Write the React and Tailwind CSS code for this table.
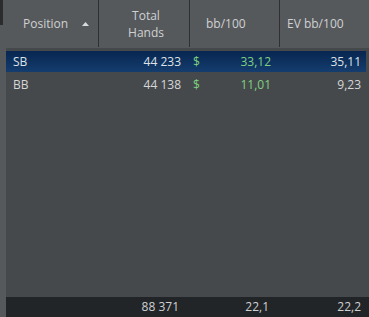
const rows = [
  { pos: 'SB', hands: '44 233', bb: '33,12', ev: '35,11', selected: true },
  { pos: 'BB', hands: '44 138', bb: '11,01', ev: '9,23', selected: false },
];

export default function App() {
  return (
    <div className="w-[369px] h-[317px] flex bg-[#46494c] text-[12px] text-[#d4d6d8] overflow-hidden" style={{ fontFamily: '"Open Sans", "Noto Sans", sans-serif' }}>
      <div className="w-[6px] shrink-0 bg-[#56595c] flex flex-col">
        <div className="w-[3px] h-[25px] bg-[#2a2c2e]"></div>
      </div>
      <div className="flex-1 flex flex-col">
        {/* header */}
        <div className="h-[48px] shrink-0 bg-[#56595c] grid grid-cols-[93px_91px_90px_1fr] text-[#cfd1d3]">
          <div className="flex items-center pl-[17px] pr-[9px] h-[47px] border-r border-[#2e3032]">
            <span>Position</span>
            <svg className="ml-auto" width="7" height="4" viewBox="0 0 7 4">
              <polygon points="3.5,0 7,4 0,4" fill="#d8dadc" />
            </svg>
          </div>
          <div className="flex flex-col items-center justify-center h-[47px] border-r border-[#2e3032] leading-[17px] pl-[4px]">
            <span>Total</span>
            <span>Hands</span>
          </div>
          <div className="flex items-center pl-[16px] h-[47px] border-r border-[#2e3032]">bb/100</div>
          <div className="flex items-center pl-[7px] h-[47px]">EV bb/100</div>
        </div>
        {/* body */}
        <div className="flex-1 pt-[3px] pr-[3px]">
          {rows.map((r) => (
            <div
              key={r.pos}
              className={`h-[21px] mb-[2px] grid grid-cols-[93px_91px_90px_1fr] items-center ${r.selected ? 'bg-gradient-to-b from-[#082650] to-[#143d6e] text-[#dfe2e6]' : ''}`}
            >
              <div className="pl-[7px]">{r.pos}</div>
              <div className="text-right pr-[9px]">{r.hands}</div>
              <div className="flex pl-[3px] pr-[9px] text-[#7fd17f]">
                <span>$</span>
                <span className="ml-auto">{r.bb}</span>
              </div>
              <div className="text-right pr-[5px]">{r.ev}</div>
            </div>
          ))}
        </div>
        {/* footer */}
        <div className="h-[20px] shrink-0 bg-[#222528] grid grid-cols-[93px_91px_90px_1fr] items-center text-[#cfd1d3]">
          <div></div>
          <div className="text-right pr-[11px]">88 371</div>
          <div className="text-right pr-[11px]">22,1</div>
          <div className="text-right pr-[8px]">22,2</div>
        </div>
      </div>
    </div>
  );
}
